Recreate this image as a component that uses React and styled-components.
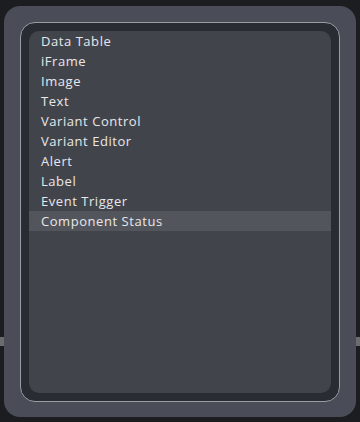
import React from "react";
import styled, { createGlobalStyle } from "styled-components";

const Global = createGlobalStyle`
  html, body { margin: 0; padding: 0; background: #1c1d21; }
  body { font-family: "Open Sans", "Liberation Sans", sans-serif; }
`;

const Stage = styled.div`
  position: relative;
  width: 360px;
  height: 422px;
  padding: 6px 4px 5px;
  box-sizing: border-box;
  overflow: hidden;
`;

const Rail = styled.div`
  position: absolute;
  left: 0;
  right: 0;
  top: 337px;
  height: 9px;
  background: #6b6c6e;
`;

const Panel = styled.div`
  position: relative;
  height: 100%;
  box-sizing: border-box;
  background: #4a4d57;
  border-radius: 16px;
  padding: 16px 16px 15px;
`;

const Frame = styled.div`
  height: 100%;
  box-sizing: border-box;
  background: #2a2c34;
  border: 1px solid #9a9ca3;
  border-radius: 15px;
  padding: 8px;
`;

const List = styled.ul`
  list-style: none;
  margin: 0;
  padding: 0;
  height: 100%;
  box-sizing: border-box;
  background: #42444c;
  border-radius: 10px;
  overflow: hidden;
`;

const Item = styled.li`
  height: 20px;
  line-height: 20px;
  padding-left: 12px;
  font-size: 13px;
  letter-spacing: 0.55px;
  color: #e8e8ea;
  background: ${(p) => (p.$active ? "#53555d" : "transparent")};
  white-space: nowrap;
`;

const items = [
  "Data Table",
  "iFrame",
  "Image",
  "Text",
  "Variant Control",
  "Variant Editor",
  "Alert",
  "Label",
  "Event Trigger",
  "Component Status",
];

export default function App() {
  return (
    <>
      <Global />
      <Stage>
        <Rail />
        <Panel>
          <Frame>
            <List>
              {items.map((t, i) => (
                <Item key={t} $active={i === items.length - 1}>
                  {t}
                </Item>
              ))}
            </List>
          </Frame>
        </Panel>
      </Stage>
    </>
  );
}
